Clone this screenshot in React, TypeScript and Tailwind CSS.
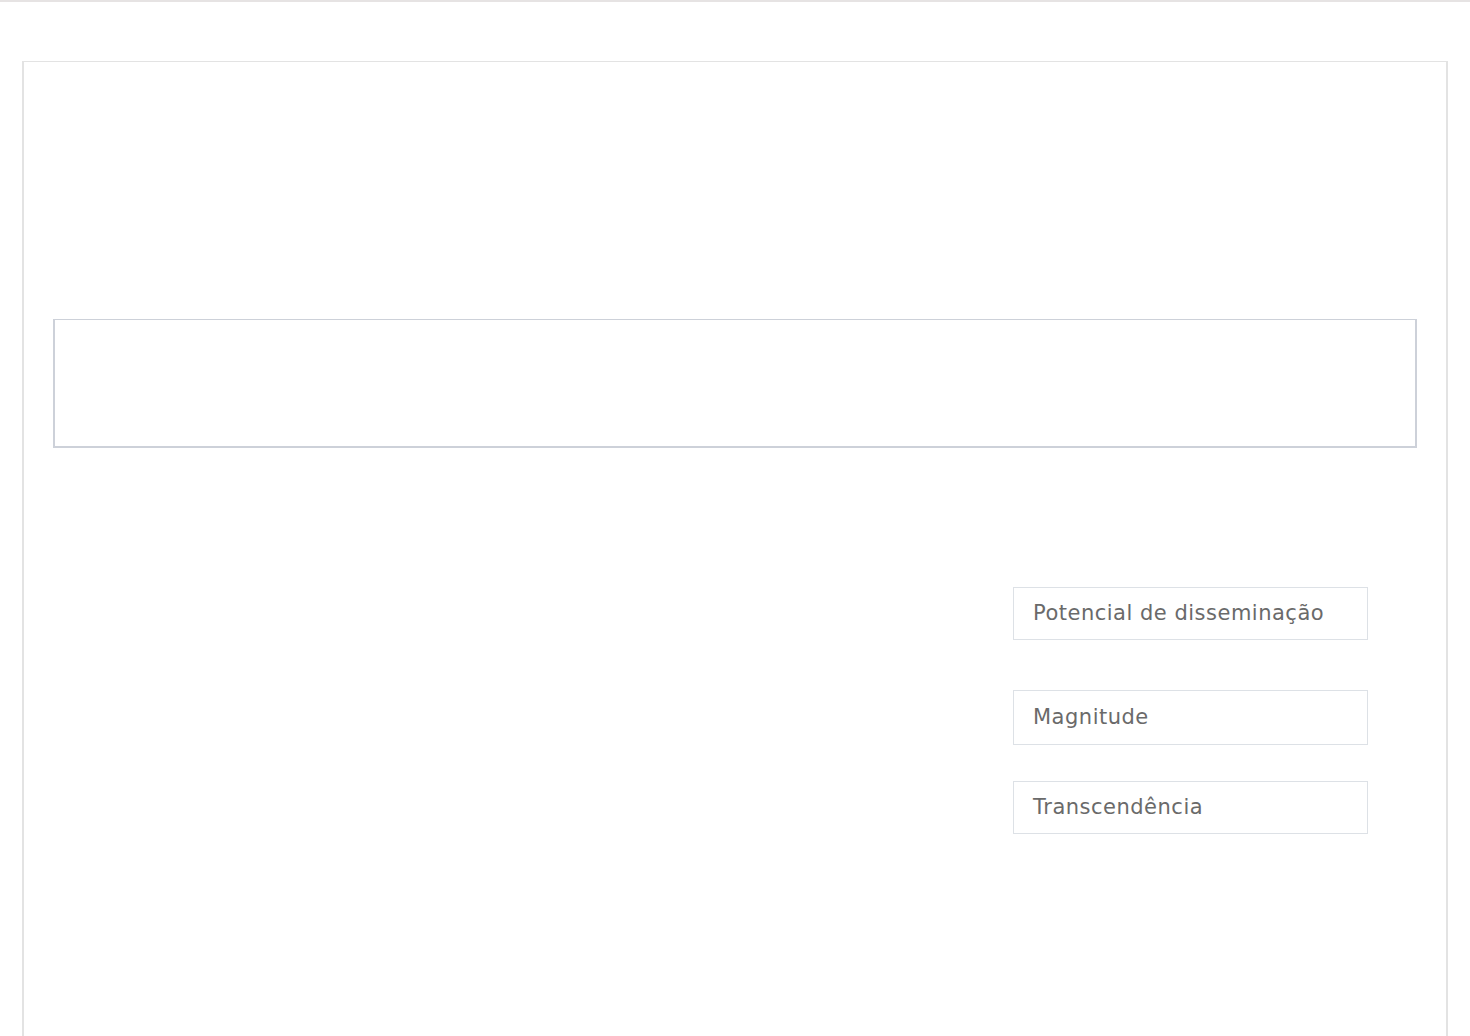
export default function App() {
  const font = { fontFamily: '"Century Gothic", "DejaVu Sans", sans-serif' };
  return (
    <div className="min-h-screen bg-white">
      <div className="h-[2px] bg-[#e6e3e3]" />
      <div className="px-[22px] pt-[59px]">
        <div className="h-[1000px] border-x-2 border-t border-[#e3e3e3] px-[29px]">
          <div className="mt-[257px] h-[129px] border-x-2 border-b-2 border-t border-[#cdd1d9]" />
          <div className="mt-[139px] flex justify-end pr-[49px]">
            <div className="flex w-[355px] flex-col" style={font}>
              <div className="flex h-[53px] items-center border-[1.5px] border-[#dde1e6] pl-[19px] text-[21px] tracking-[0.5px] text-[#6a6a6a]">
                Potencial de disseminação
              </div>
              <div className="mt-[50px] flex h-[55px] items-center border-[1.5px] border-[#dde1e6] pl-[19px] text-[21px] tracking-[0.5px] text-[#6a6a6a]">
                Magnitude
              </div>
              <div className="mt-[36px] flex h-[53px] items-center border-[1.5px] border-[#dde1e6] pl-[19px] text-[21px] tracking-[0.5px] text-[#6a6a6a]">
                Transcendência
              </div>
            </div>
          </div>
        </div>
      </div>
    </div>
  );
}
